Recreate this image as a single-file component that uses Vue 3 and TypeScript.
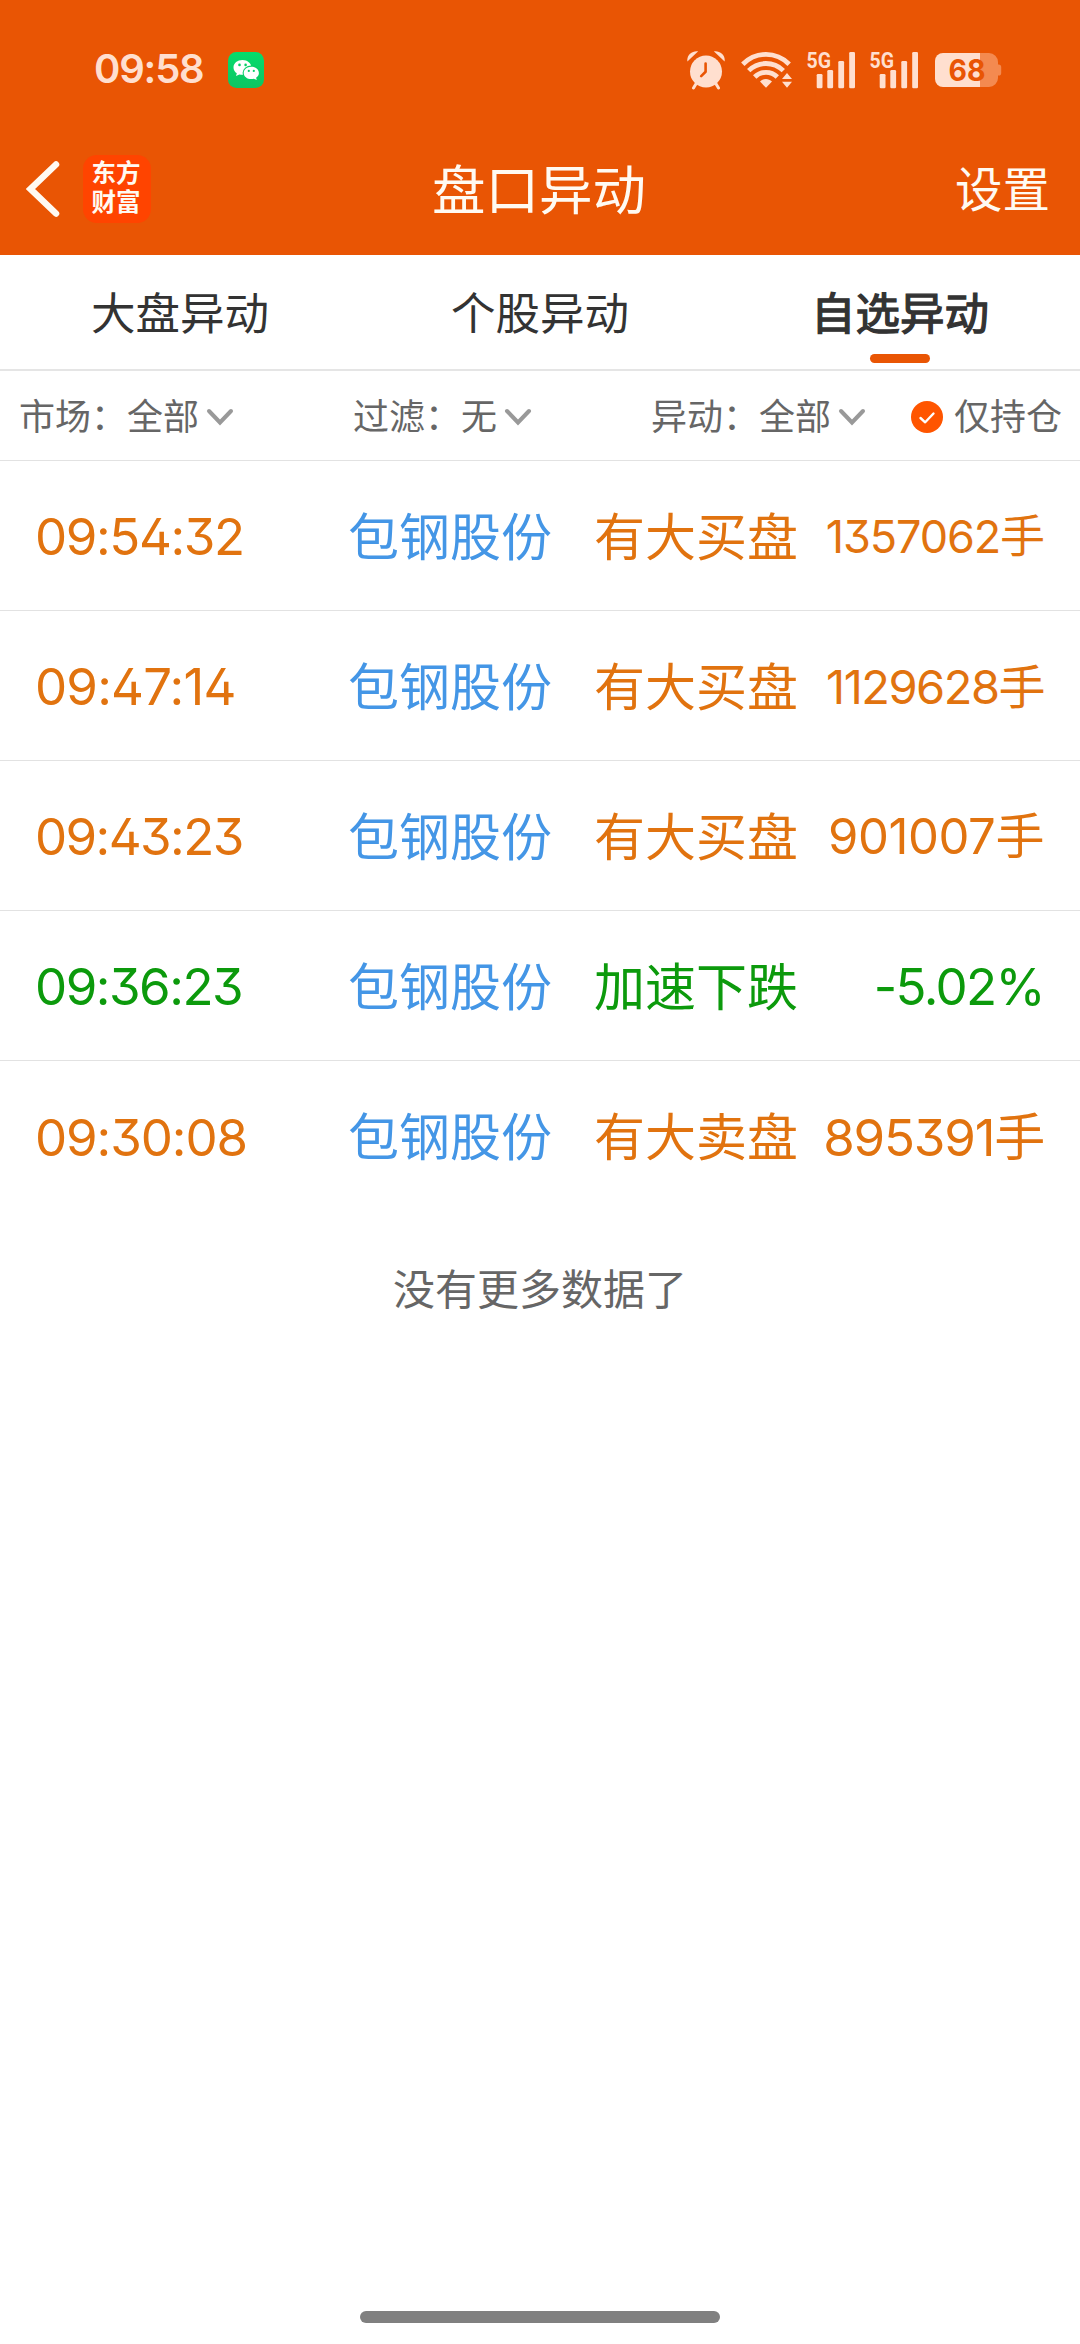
<script setup lang="ts">
type Tone = 'up' | 'down'

interface Alert {
  time: string
  name: string
  event: string
  value: string
  tone: Tone
  size: number
  tracking: number
  timeTracking: number
}

const tabs: string[] = ['大盘异动', '个股异动', '自选异动']
const activeTab = 2

const filters = [
  { key: 'market', label: '市场', value: '全部' },
  { key: 'scope', label: '过滤', value: '无' },
  { key: 'kind', label: '异动', value: '全部' },
]

const alerts: Alert[] = [
  { time: '09:54:32', name: '包钢股份', event: '有大买盘', value: '1357062手', tone: 'up', size: 45, tracking: -1.1, timeTracking: -1.4 },
  { time: '09:47:14', name: '包钢股份', event: '有大买盘', value: '1129628手', tone: 'up', size: 47, tracking: -1.5, timeTracking: -0.8 },
  { time: '09:43:23', name: '包钢股份', event: '有大买盘', value: '901007手', tone: 'up', size: 49, tracking: -0.4, timeTracking: -1.6 },
  { time: '09:36:23', name: '包钢股份', event: '加速下跌', value: '-5.02%', tone: 'down', size: 51, tracking: -1.6, timeTracking: -1.5 },
  { time: '09:30:08', name: '包钢股份', event: '有大卖盘', value: '895391手', tone: 'up', size: 51, tracking: -1.2, timeTracking: -1.1 },
]
</script>

<template>
  <div class="screen">
    <header class="top">
      <div class="status">
        <span class="clock">09:58</span>
        <svg class="wechat" width="36" height="36" viewBox="0 0 36 36">
          <defs>
            <linearGradient id="wx" x1="0" y1="0" x2="0" y2="1">
              <stop offset="0" stop-color="#06dc6c" />
              <stop offset="1" stop-color="#0cc562" />
            </linearGradient>
          </defs>
          <rect width="36" height="36" rx="8.5" fill="url(#wx)" />
          <path d="M14.500 8C9.500 8 5.500 11.200 5.500 15.400c0 2.400 1.300 4.400 3.300 5.800L8 24l3.400-1.600c1 .3 2 .4 3.100.4 4.900 0 8.900-3.300 8.900-7.400S19.400 8 14.500 8z" fill="#fff" />
          <ellipse cx="23.300" cy="20.900" rx="8.700" ry="7.400" fill="#08ce66" />
          <path d="M23.300 14.700c-4.200 0-7.600 2.800-7.600 6.200s3.400 6.200 7.600 6.200c.9 0 1.800-.1 2.600-.4l2.900 1.400-.7-2.400c1.700-1.200 2.800-2.900 2.800-4.800 0-3.400-3.400-6.200-7.600-6.200z" fill="#fff" />
          <g fill="#08ce66">
            <circle cx="11.500" cy="12.900" r="1.300" /><circle cx="17.600" cy="12.900" r="1.300" />
            <circle cx="20.800" cy="18.900" r="1.100" /><circle cx="25.800" cy="18.900" r="1.100" />
          </g>
        </svg>
        <div class="indicators">
          <svg width="38" height="40" viewBox="0 0 38 40" fill="#ffdfcf">
            <circle cx="19" cy="21.500" r="16" />
            <path d="M.4 11.500C-.6 5 5 .4 11.200 1.300z" />
            <path d="M37.600 11.500C38.600 5 33 .4 26.800 1.300z" />
            <path d="M9.500 33l-3 5M28.500 33l3 5" stroke="#ffdfcf" stroke-width="3" stroke-linecap="round" />
            <path d="M18.600 13.500v8.300l-4.400 4.300" fill="none" stroke="#e95504" stroke-width="2.600" stroke-linecap="round" stroke-linejoin="round" />
          </svg>
          <svg class="wifi" width="52" height="38" viewBox="0 0 52 38">
            <g fill="none" stroke="#ffdfcf" stroke-width="4.800">
              <path d="M1.800 13.200C15 .1 35 .1 48.200 13.200" />
              <path d="M7.700 19.600C17.500 10.100 32.500 10.100 42.300 19.600" />
              <path d="M13.700 26C20 19.700 30 19.700 36.300 26" />
            </g>
            <path d="M19 30.600C22.500 27.200 27.500 27.200 31 30.600L25 36.800z" fill="#ffdfcf" />
            <path d="M46 22l5 6H41zM46 36.800l5-6H41z" fill="#ffdfcf" />
          </svg>
          <svg v-for="n in 2" :key="n" class="signal" width="49" height="50" viewBox="0 -6 49 50" fill="#ffdfcf">
            <text x="-0.500" y="16.500" textLength="24.500" lengthAdjust="spacingAndGlyphs" class="net">5G</text>
            <rect x="9.700" y="23" width="5.800" height="14.300" rx="1.300" />
            <rect x="20.300" y="19" width="5.800" height="18.300" rx="1.300" />
            <rect x="31.300" y="10" width="5.800" height="27.300" rx="1.300" />
            <rect x="42.200" y="1" width="5.800" height="36.300" rx="1.300" />
          </svg>
          <svg width="67" height="34" viewBox="0 0 67 34">
            <path d="M45 0h9a9 9 0 0 1 9 9v2.500h.6a2.600 2.600 0 0 1 2.600 2.600v5.800a2.600 2.600 0 0 1-2.600 2.600H63V25a9 9 0 0 1-9 9h-9z" fill="#f48a50" />
            <path d="M45 0H8a8 8 0 0 0-8 8v18a8 8 0 0 0 8 8h37z" fill="#ffdfcf" />
            <text x="13.500" y="28.300" textLength="37" lengthAdjust="spacingAndGlyphs" class="level">68</text>
          </svg>
        </div>
      </div>

      <nav class="bar">
        <div class="side">
          <svg width="34" height="56" viewBox="0 0 34 56">
            <path d="M30 3.500L4.500 28 30 52.500" fill="none" stroke="#fffaf2" stroke-width="6.500" stroke-linecap="round" stroke-linejoin="miter" />
          </svg>
          <div class="logo"><span>东方</span><span>财富</span></div>
        </div>
        <h1>盘口异动</h1>
        <span class="settings">设置</span>
      </nav>
    </header>

    <div class="tabs">
      <div v-for="(tab, i) in tabs" :key="tab" class="tab" :class="{ active: i === activeTab }">
        <span>{{ tab }}</span>
      </div>
    </div>

    <div class="filters">
      <div v-for="f in filters" :key="f.key" class="filter" :class="f.key">
        <span>{{ f.label }}：{{ f.value }}</span>
        <svg width="28" height="18" viewBox="0 0 28 18">
          <path d="M3 3l11 11.500L25 3" fill="none" stroke="#999" stroke-width="4" stroke-linecap="round" />
        </svg>
      </div>
      <div class="holding">
        <svg width="32" height="32" viewBox="0 0 32 32">
          <circle cx="16" cy="16" r="16" fill="#ff5500" />
          <path d="M9.500 17l4.700 4.300 8.300-8.800" fill="none" stroke="#fff" stroke-width="2.400" stroke-linecap="round" stroke-linejoin="round" />
        </svg>
        <span>仅持仓</span>
      </div>
    </div>

    <ul class="list">
      <li v-for="a in alerts" :key="a.time" :class="a.tone">
        <span class="time" :style="{ letterSpacing: a.timeTracking + 'px' }">{{ a.time }}</span>
        <span class="name">{{ a.name }}</span>
        <span class="event">{{ a.event }}</span>
        <span class="value" :style="{ fontSize: a.size + 'px', letterSpacing: a.tracking + 'px' }">{{ a.value }}</span>
      </li>
    </ul>

    <p class="end">没有更多数据了</p>
    <div class="home"></div>
  </div>
</template>

<style>
body {
  margin: 0;
  background: #fff;
}
</style>

<style scoped>
.screen {
  width: 1080px;
  height: 2344px;
  display: flex;
  flex-direction: column;
  overflow: hidden;
  background: #fff;
  font-family: Inter, 'Noto Sans CJK SC', sans-serif;
  font-feature-settings: 'cv02' 1, 'cv09' 1;
  white-space: nowrap;
}
.top {
  height: 255px;
  background: #e95504;
  color: #fffaf2;
}
.status {
  height: 140px;
  box-sizing: border-box;
  padding: 0 78px 0 94px;
  display: flex;
  align-items: center;
}
.clock {
  width: 134px;
  margin-top: -3px;
  font-size: 40px;
  font-weight: 600;
  line-height: 48px;
  letter-spacing: -1.200px;
  color: #ffdfcf;
  font-feature-settings: normal;
}
.indicators {
  margin-left: auto;
  display: flex;
  align-items: center;
}
.wifi {
  margin-left: 16px;
}
.signal {
  margin-left: 14px;
  overflow: visible;
}
.signal + svg:last-child {
  margin-left: 16px;
}
.net {
  font: 700 22.500px Roboto, sans-serif;
}
.level {
  font: 700 30px Inter, sans-serif;
  fill: #e95504;
}
.bar {
  height: 98px;
  padding: 0 30px 0 26px;
  display: grid;
  grid-template-columns: 1fr auto 1fr;
  align-items: center;
}
.side {
  display: flex;
  align-items: center;
  gap: 23px;
}
.logo {
  width: 68px;
  height: 68px;
  margin-top: -1px;
  box-sizing: border-box;
  padding: 0 2px 2px 0;
  border-radius: 14px;
  background: #ff4400;
  display: flex;
  flex-direction: column;
  align-items: center;
  justify-content: center;
  font-size: 24.500px;
  font-weight: 700;
  line-height: 29px;
}
h1 {
  margin: 3px -1px 0 1px;
  font-size: 53.500px;
  font-weight: 400;
  line-height: 64px;
}
.settings {
  justify-self: end;
  margin-top: 2px;
  font-size: 47.500px;
  line-height: 60px;
}
.tabs {
  height: 114px;
  display: flex;
  border-bottom: 2px solid #e5e5e5;
  color: #333;
}
.tab {
  flex: 1;
  display: flex;
  flex-direction: column;
  align-items: center;
  font-size: 44.500px;
  line-height: 60px;
  padding-top: 29px;
}
.tab.active {
  -webkit-text-stroke: 1.300px #333;
}
.tab.active::after {
  content: '';
  width: 60px;
  height: 9px;
  margin-top: 10px;
  border-radius: 5px;
  background: #e95504;
}
.filters {
  height: 87px;
  padding: 2px 18px 0 19px;
  display: flex;
  align-items: center;
  border-bottom: 1px solid #e2e2e2;
  font-size: 36px;
  line-height: 44px;
  color: #666;
}
.filter {
  display: flex;
  align-items: center;
  gap: 7px;
}
.market {
  width: 334px;
}
.scope {
  width: 298px;
}
.kind {
  width: 260px;
}
.holding {
  display: flex;
  align-items: center;
  gap: 11px;
}
.list {
  margin: 0;
  padding: 0;
  list-style: none;
}
li {
  height: 150px;
  box-sizing: border-box;
  padding: 3px 36px 0 35px;
  display: grid;
  grid-template-columns: 313px 246px 1fr auto;
  align-items: center;
  border-bottom: 1px solid #e2e2e2;
  font-size: 51px;
  line-height: 62px;
}
li:last-child {
  border-bottom: 0;
}
.name,
.event {
  padding-top: 1px;
}
.up {
  color: #e1730f;
}
.down {
  color: #0c9a0c;
}
.name {
  color: #4496e6;
}
.end {
  margin: 49px 0 0;
  text-align: center;
  font-size: 42px;
  line-height: 60px;
  color: #666;
}
.home {
  width: 360px;
  height: 12px;
  margin: auto auto 21px;
  border-radius: 6px;
  background: #808080;
}
</style>
